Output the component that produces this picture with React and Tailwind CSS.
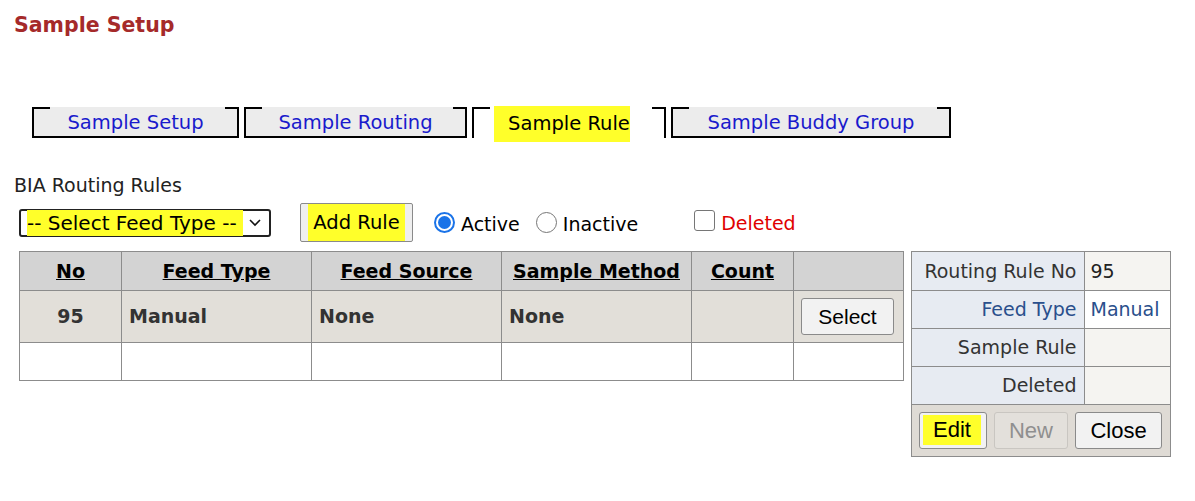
import React from "react";

const tabs = [
  { label: "Sample Setup", w: "w-[207px]" },
  { label: "Sample Routing", w: "w-[223px]" },
  { label: "Sample Rule", w: "w-[194px]", active: true },
  { label: "Sample Buddy Group", w: "w-[280px]" },
];

function Tab({ label, w, active }) {
  return (
    <div
      className={`relative flex h-[31px] items-center justify-center border-x-2 border-black ${w} ${
        active ? "bg-white" : "border-b-2 bg-[#ececec]"
      }`}
    >
      <span className="absolute left-[-2px] top-0 h-[2px] w-[18px] bg-black" />
      <span className="absolute right-[-2px] top-0 h-[2px] w-[14px] bg-black" />
      {active ? (
        <span className="mr-[14px] mt-[3px] bg-[#ffff2a] pb-[3px] pl-[14px] pt-[3px] text-black">{label}</span>
      ) : (
        <span className="mt-[2px] text-[#1a1acc]">{label}</span>
      )}
    </div>
  );
}

const cols = [
  { label: "No", w: "w-[102px]" },
  { label: "Feed Type", w: "w-[190px]" },
  { label: "Feed Source", w: "w-[190px]" },
  { label: "Sample Method", w: "w-[190px]" },
  { label: "Count", w: "w-[102px]" },
  { label: "", w: "w-[110px]" },
];

export default function App() {
  return (
    <div className="min-h-[501px] bg-white font-['DejaVu_Sans',Verdana,sans-serif] text-[19px] text-[#222]">
      <h1 className="px-[14px] pt-[10px] text-[20.5px] font-bold leading-[30px] text-[#a52a2a]">Sample Setup</h1>

      <div className="mt-[67px] flex gap-[5px] pl-[32px] text-[19.5px]">
        {tabs.map((t) => (
          <Tab key={t.label} {...t} />
        ))}
      </div>

      <div className="mt-[33px] px-[14px] leading-[28px] text-[#222]">BIA Routing Rules</div>

      <div className="mt-[4px] flex items-center pl-[19px]">
        <div className="flex h-[28px] w-[252px] items-center rounded-[3px] border-2 border-[#222] pl-[6px]">
          <span className="bg-[#ffff2a] pr-[6px] text-[20px] leading-[26px] text-black">-- Select Feed Type --</span>
          <svg className="ml-[5px]" width="14" height="10" viewBox="0 0 14 10">
            <path d="M2 2 L7 7 L12 2" fill="none" stroke="#111" strokeWidth="1.6" />
          </svg>
        </div>
        <button className="ml-[29px] flex h-[39px] w-[113px] items-center justify-center rounded-[2px] border border-[#8a8a8a] bg-[#efefef]">
          <span className="bg-[#ffff2a] px-[5px] py-[4px] text-[19.5px] text-black">Add Rule</span>
        </button>
        <label className="ml-[21px] mt-[4px] flex items-center">
          <span className="mb-[4px] flex h-[21px] w-[21px] items-center justify-center rounded-full border-2 border-[#1a73e8]">
            <span className="h-[13px] w-[13px] rounded-full bg-[#1a73e8]" />
          </span>
          <span className="ml-[6px] text-[19px] text-black">Active</span>
        </label>
        <label className="ml-[16px] mt-[4px] flex items-center">
          <span className="mb-[4px] h-[21px] w-[21px] rounded-full border border-[#767676]" />
          <span className="ml-[6px] text-[19px] text-black">Inactive</span>
        </label>
        <label className="ml-[56px] flex items-center">
          <span className="mb-[4px] h-[21px] w-[21px] rounded-[3px] border border-[#767676]" />
          <span className="ml-[6px] mt-[2px] text-[19px] text-[#e00000]">Deleted</span>
        </label>
      </div>

      <div className="mt-[9px] flex items-start pl-[19px]">
        <table className="border-collapse border border-[#8c8c8c]">
          <thead>
            <tr className="h-[39px] bg-[#d3d3d3]">
              {cols.map((c) => (
                <th key={c.label} className={`${c.w} border border-[#8c8c8c] p-0 text-center font-bold text-black underline`}>
                  {c.label}
                </th>
              ))}
            </tr>
          </thead>
          <tbody>
            <tr className="h-[52px] bg-[#e2dfd9] font-bold text-[#333]">
              <td className="border border-[#8c8c8c] text-center">95</td>
              <td className="border border-[#8c8c8c] pl-[7px]">Manual</td>
              <td className="border border-[#8c8c8c] pl-[7px]">None</td>
              <td className="border border-[#8c8c8c] pl-[7px]">None</td>
              <td className="border border-[#8c8c8c]" />
              <td className="border border-[#8c8c8c] px-[7px]">
                <button className="h-[37px] w-[93px] rounded-[3px] border border-[#8a8a8a] bg-[#f2f2f2] font-['Liberation_Sans',Arial,sans-serif] text-[21px] font-normal text-black">
                  Select
                </button>
              </td>
            </tr>
            <tr className="h-[38px] bg-white">
              {cols.map((c, i) => (
                <td key={i} className="border border-[#8c8c8c]" />
              ))}
            </tr>
          </tbody>
        </table>

        <div className="ml-[7px] w-[260px] border border-[#8c8c8c]">
          <table className="w-full border-collapse">
            <tbody>
              {[
                ["Routing Rule No", "95", "text-[#333]", "bg-[#f5f4f1] text-[#222]"],
                ["Feed Type", "Manual", "text-[#2a4f8c]", "bg-white text-[#2a4f8c]"],
                ["Sample Rule", "", "text-[#333]", "bg-[#f5f4f1]"],
                ["Deleted", "", "text-[#333]", "bg-[#f5f4f1]"],
              ].map(([k, v, kc, vc]) => (
                <tr key={k} className="h-[38px]">
                  <td className={`w-[172px] border-b border-r border-[#8c8c8c] bg-[#e7ebf2] pr-[7px] text-right ${kc}`}>{k}</td>
                  <td className={`border-b border-[#8c8c8c] pl-[6px] ${vc}`}>{v}</td>
                </tr>
              ))}
            </tbody>
          </table>
          <div className="flex h-[51px] items-center gap-[7px] bg-[#dfdbd5] px-[7px] font-['Liberation_Sans',Arial,sans-serif] text-[22px]">
            <button className="flex h-[37px] w-[68px] items-center rounded-[3px] border border-[#8a8a8a] bg-[#f2f2f2] pl-[3px] text-black">
              <span className="bg-[#ffff2a] px-[10px] leading-[30px]">Edit</span>
            </button>
            <button className="h-[37px] w-[74px] rounded-[3px] border border-[#c9c6c1] bg-[#e3e0db] text-[#8f8f8f]">New</button>
            <button className="h-[37px] w-[87px] rounded-[3px] border border-[#8a8a8a] bg-[#f2f2f2] text-black">Close</button>
          </div>
        </div>
      </div>
    </div>
  );
}
